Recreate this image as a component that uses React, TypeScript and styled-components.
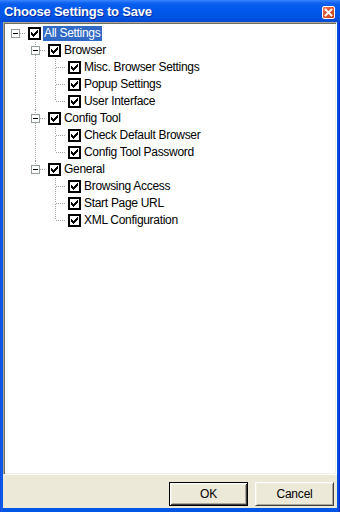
import React from 'react';
import styled, { createGlobalStyle } from 'styled-components';

const Global = createGlobalStyle`
  html, body { margin: 0; padding: 0; background: #fff; }
  body { width: 340px; height: 512px; overflow: hidden; font-family: "Liberation Sans", Arial, sans-serif; }
`;

const Window = styled.div`
  width: 340px;
  height: 512px;
  box-sizing: border-box;
  display: flex;
  flex-direction: column;
  background: linear-gradient(90deg, #0831D9 0, #166AEE 1px, #0855DD 2px, #0055E5 3px, #0055E5 337px, #0855DD 338px, #0831D9 339px);
`;

const TitleBar = styled.div`
  height: 22px;
  flex: none;
  display: flex;
  align-items: center;
  justify-content: space-between;
  padding: 1px 5px 0 4px;
  box-sizing: border-box;
  background: linear-gradient(#3A86FF 0, #1C6DF7 2px, #0A5EEE 4px, #0058EB 45%, #0054E3 80%, #0049D2 100%);
`;

const Title = styled.span`
  color: #fff;
  font: bold 13px "Liberation Sans", Arial, sans-serif;
  letter-spacing: -0.2px;
  text-shadow: 1px 1px 0 #0A2C9A;
`;

const CloseButton = styled.div`
  width: 13px;
  height: 13px;
  box-sizing: border-box;
  border: 1px solid #fff;
  border-radius: 2px;
  background: linear-gradient(135deg, #EB7B5C 0, #E05A35 40%, #C8421C 100%);
  display: flex;
  align-items: center;
  justify-content: center;
  margin-top: 2px;
`;

const Client = styled.div`
  flex: 1;
  display: flex;
  flex-direction: column;
  margin: 0 3px 4px 3px;
  background: #ECE9D8;
  min-height: 0;
`;

const TreeBox = styled.div`
  flex: 1;
  background: #fff;
  border: 1px solid;
  border-color: #ACA899 #FFFFFF #FFFFFF #ACA899;
  box-shadow: inset 1px 1px 0 #716F64, inset -1px -1px 0 #F1EFE2;
  padding: 2px;
  display: flex;
  flex-direction: column;
`;

const Row = styled.div`
  height: 17px;
  display: flex;
  align-items: center;
`;

const Cell = styled.svg`
  width: 20px;
  height: 17px;
  flex: none;
  display: block;
`;

const Check = styled.svg`
  width: 13px;
  height: 13px;
  flex: none;
  display: block;
  margin-left: 2px;
`;

const Label = styled.span<{ $selected?: boolean }>`
  margin-left: 2px;
  height: 15px;
  line-height: 15px;
  padding: 0 2px 0 1px;
  font-size: 12px;
  letter-spacing: -0.3px;
  white-space: nowrap;
  color: ${(p) => (p.$selected ? '#fff' : '#000')};
  background: ${(p) => (p.$selected ? '#316AC5' : 'transparent')};
`;

const ButtonBar = styled.div`
  height: 33px;
  flex: none;
  display: flex;
  justify-content: flex-end;
  align-items: flex-start;
  gap: 7px;
  padding: 7px 3px 0 0;
  box-sizing: border-box;
`;

const Button = styled.button<{ $default?: boolean }>`
  width: 79px;
  height: 24px;
  box-sizing: border-box;
  font: 12px "Liberation Sans", Arial, sans-serif;
  letter-spacing: -0.2px;
  color: #000;
  background: #ECE9D8;
  padding: 0;
  border: 1px solid;
  border-color: ${(p) => (p.$default ? '#000' : '#fff #404040 #404040 #fff')};
  box-shadow: ${(p) =>
    p.$default
      ? 'inset 1px 1px 0 #fff, inset -1px -1px 0 #404040, inset 2px 2px 0 #F1EFE2, inset -2px -2px 0 #ACA899'
      : 'inset 1px 1px 0 #F1EFE2, inset -1px -1px 0 #ACA899'};
`;

type Node = { label: string; selected?: boolean; children?: Node[] };

const tree: Node[] = [
  {
    label: 'All Settings',
    selected: true,
    children: [
      { label: 'Browser', children: [{ label: 'Misc. Browser Settings' }, { label: 'Popup Settings' }, { label: 'User Interface' }] },
      { label: 'Config Tool', children: [{ label: 'Check Default Browser' }, { label: 'Config Tool Password' }] },
      { label: 'General', children: [{ label: 'Browsing Access' }, { label: 'Start Page URL' }, { label: 'XML Configuration' }] },
    ],
  },
];

type Flat = { node: Node; guides: boolean[]; first: boolean; last: boolean; root: boolean };

function flatten(nodes: Node[], guides: boolean[], root: boolean, out: Flat[]) {
  nodes.forEach((n, i) => {
    const last = i === nodes.length - 1;
    out.push({ node: n, guides, first: i === 0, last, root });
    if (n.children) flatten(n.children, [...guides, !last], false, out);
  });
  return out;
}

const rows = flatten(tree, [], true, []);

const DOT = '#A0A0A0';

const Guide = ({ on }: { on: boolean }) => (
  <Cell viewBox="0 0 20 17">
    {on && <line x1="9.5" y1="0" x2="9.5" y2="17" stroke={DOT} strokeDasharray="1 1" shapeRendering="crispEdges" />}
  </Cell>
);

const Connector = ({ f }: { f: Flat }) => {
  const showTop = !(f.root && f.first);
  const showBottom = !f.last;
  return (
    <Cell viewBox="0 0 20 17">
      {showTop && <line x1="9.5" y1="0" x2="9.5" y2="8" stroke={DOT} strokeDasharray="1 1" shapeRendering="crispEdges" />}
      {showBottom && <line x1="9.5" y1="9" x2="9.5" y2="17" stroke={DOT} strokeDasharray="1 1" shapeRendering="crispEdges" />}
      <line x1="10" y1="8.5" x2="20" y2="8.5" stroke={DOT} strokeDasharray="1 1" shapeRendering="crispEdges" />
      {f.node.children && (
        <g shapeRendering="crispEdges">
          <rect x="5.5" y="4.5" width="8" height="8" fill="#fff" stroke="#919B9C" />
          <rect x="7" y="8" width="5" height="1" fill="#000" />
        </g>
      )}
    </Cell>
  );
};

const CheckBox = () => (
  <Check viewBox="0 0 13 13">
    <rect x="0" y="0" width="13" height="13" fill="#000" />
    <rect x="2" y="2" width="9" height="9" fill="#fff" />
    <g fill="#000" shapeRendering="crispEdges">
      <rect x="9" y="3" width="1" height="3" />
      <rect x="8" y="4" width="1" height="3" />
      <rect x="7" y="5" width="1" height="3" />
      <rect x="6" y="6" width="1" height="3" />
      <rect x="5" y="7" width="1" height="3" />
      <rect x="4" y="6" width="1" height="3" />
      <rect x="3" y="5" width="1" height="3" />
    </g>
  </Check>
);

export default function App() {
  return (
    <>
      <Global />
      <Window>
        <TitleBar>
          <Title>Choose Settings to Save</Title>
          <CloseButton>
            <svg width="9" height="9" viewBox="0 0 9 9">
              <path d="M1.5 1.5 L7.5 7.5 M7.5 1.5 L1.5 7.5" stroke="#fff" strokeWidth="1.8" strokeLinecap="square" />
            </svg>
          </CloseButton>
        </TitleBar>
        <Client>
          <TreeBox>
            {rows.map((f, i) => (
              <Row key={i}>
                {f.guides.map((g, j) => (
                  <Guide key={j} on={g} />
                ))}
                <Connector f={f} />
                <CheckBox />
                <Label $selected={f.node.selected}>{f.node.label}</Label>
              </Row>
            ))}
          </TreeBox>
          <ButtonBar>
            <Button $default>OK</Button>
            <Button>Cancel</Button>
          </ButtonBar>
        </Client>
      </Window>
    </>
  );
}
